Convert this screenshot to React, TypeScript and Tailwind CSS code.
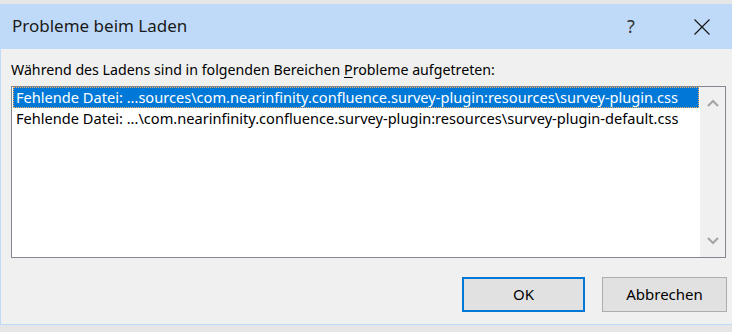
import React from "react";

const font = { fontFamily: '"Noto Sans", "Open Sans", sans-serif' };

export default function App() {
  return (
    <div
      className="w-[732px] h-[332px] bg-[#e6e6e6] pt-[4px] pb-[7px] overflow-hidden"
      style={font}
    >
      <div className="h-full w-full border-l border-b border-[#bfdaf9] flex flex-col">
        {/* Title bar */}
        <div className="h-[45px] bg-[#bfdaf9] flex items-center pl-[11px] text-[#1a1a1a] shrink-0">
          <div className="text-[17px] leading-[24px] flex-1 pb-[1px]">Probleme beim Laden</div>
          <div className="w-[20px] text-[18px] leading-[24px] text-[#333] mr-[53px] text-center pb-[1px]">?</div>
          <div className="w-[16px] mr-[22px]">
            <svg width="16" height="16" viewBox="0 0 16 16" className="block">
              <path d="M0.5 0.5 L15.5 15.5 M15.5 0.5 L0.5 15.5" stroke="#111" strokeWidth="1.1" fill="none" />
            </svg>
          </div>
        </div>
        {/* Content */}
        <div className="flex-1 bg-[#f0f0f0] pl-[10px] pt-[11px] flex flex-col">
          <div className="text-[14.2px] leading-[20px] text-black h-[20px] whitespace-nowrap">
            Während des Ladens sind in folgenden Bereichen <span className="underline underline-offset-2">P</span>robleme aufgetreten:
          </div>
          <div className="mt-[6px] w-[715px] h-[172px] border border-[#828790] bg-white flex">
            <div className="flex-1 pl-[1px] pr-[1px] flex flex-col">
              <div className="h-[21px] bg-[#0078d7] text-white border border-dotted border-[#ffb05a] pl-[2px] text-[14.6px] leading-[19px] whitespace-nowrap">
                Fehlende Datei: ...sources\com.nearinfinity.confluence.survey-plugin:resources\survey-plugin.css
              </div>
              <div className="h-[21px] text-black pl-[3px] text-[14.6px] leading-[21px] whitespace-nowrap">
                Fehlende Datei: ...\com.nearinfinity.confluence.survey-plugin:resources\survey-plugin-default.css
              </div>
            </div>
            <div className="w-[25px] bg-[#f0f0f0] flex flex-col justify-between items-center py-[12px]">
              <svg width="12" height="8" viewBox="0 0 12 8" className="block">
                <path d="M1 7 L6 2 L11 7" stroke="#a3a3a3" strokeWidth="2" fill="none" />
              </svg>
              <svg width="12" height="8" viewBox="0 0 12 8" className="block">
                <path d="M1 1 L6 6 L11 1" stroke="#a3a3a3" strokeWidth="2" fill="none" />
              </svg>
            </div>
          </div>
          <div className="mt-[19px] flex gap-[17px] justify-end w-[716px]">
            <button className="w-[123px] h-[35px] bg-[#e1e1e1] border-2 border-[#0078d7] text-[15px] text-black">
              OK
            </button>
            <button className="w-[125px] h-[35px] bg-[#e1e1e1] border border-[#adadad] text-[15px] text-black">
              Abbrechen
            </button>
          </div>
        </div>
      </div>
    </div>
  );
}
